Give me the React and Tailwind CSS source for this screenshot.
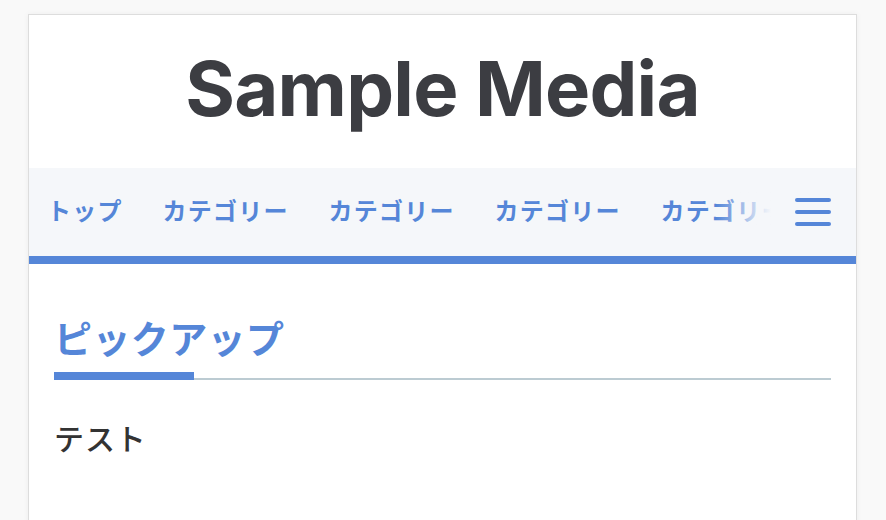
import React from "react";

const jp = { fontFamily: '"Noto Sans CJK JP", "Noto Sans", sans-serif' };

export default function App() {
  const items = ["トップ", "カテゴリー", "カテゴリー", "カテゴリー", "カテゴリー"];
  return (
    <div className="min-h-[520px] bg-[#f9f9f9] pt-[14px] pl-[28px] pr-[29px]">
      <div className="bg-white border border-[#dddddd] shadow-[0_0_6px_rgba(0,0,0,0.05)] min-h-[520px]">
        <header className="h-[153px] flex items-center justify-center">
          <h1
            className="text-[76px] font-bold text-[#3c3d42] tracking-[-0.01em] leading-none pb-[8px]"
            style={{ fontFamily: 'Inter, "Liberation Sans", sans-serif' }}
          >
            Sample Media
          </h1>
        </header>
        <nav className="h-[88px] bg-[#f5f7fa] border-b-[8px] border-[#5586d8] box-content flex items-center pl-[18px] pr-[25px]" style={jp}>
          <div className="relative flex-1 overflow-hidden pb-[4px]">
            <ul className="flex gap-[40px] whitespace-nowrap">
              {items.map((t, i) => (
                <li key={i} className="text-[24px] font-bold tracking-[0.05em] text-[#5586d8] leading-normal">
                  {t}
                </li>
              ))}
            </ul>
            <div className="absolute right-0 top-0 bottom-0 w-[55px] bg-gradient-to-r from-[#f5f7fa]/0 to-[#f5f7fa]" />
          </div>
          <button className="ml-[24px] w-[36px] flex flex-col gap-[8px]">
            <span className="block h-[4px] rounded-full bg-[#5586d8]" />
            <span className="block h-[4px] rounded-full bg-[#5586d8]" />
            <span className="block h-[4px] rounded-full bg-[#5586d8]" />
          </button>
        </nav>
        <main className="px-[25px] pt-[54px]" style={jp}>
          <div className="relative border-b-[2px] border-[#bccbd2]">
            <h2 className="text-[38px] font-semibold tracking-[0.01em] text-[#5586d8] leading-none pb-[22px]">
              ピックアップ
            </h2>
            <div className="absolute left-0 bottom-[-2px] h-[8px] w-[140px] bg-[#5586d8]" />
          </div>
          <p className="mt-[42px] text-[30px] font-medium tracking-[0.03em] text-[#333333] leading-none">テスト</p>
        </main>
      </div>
    </div>
  );
}
